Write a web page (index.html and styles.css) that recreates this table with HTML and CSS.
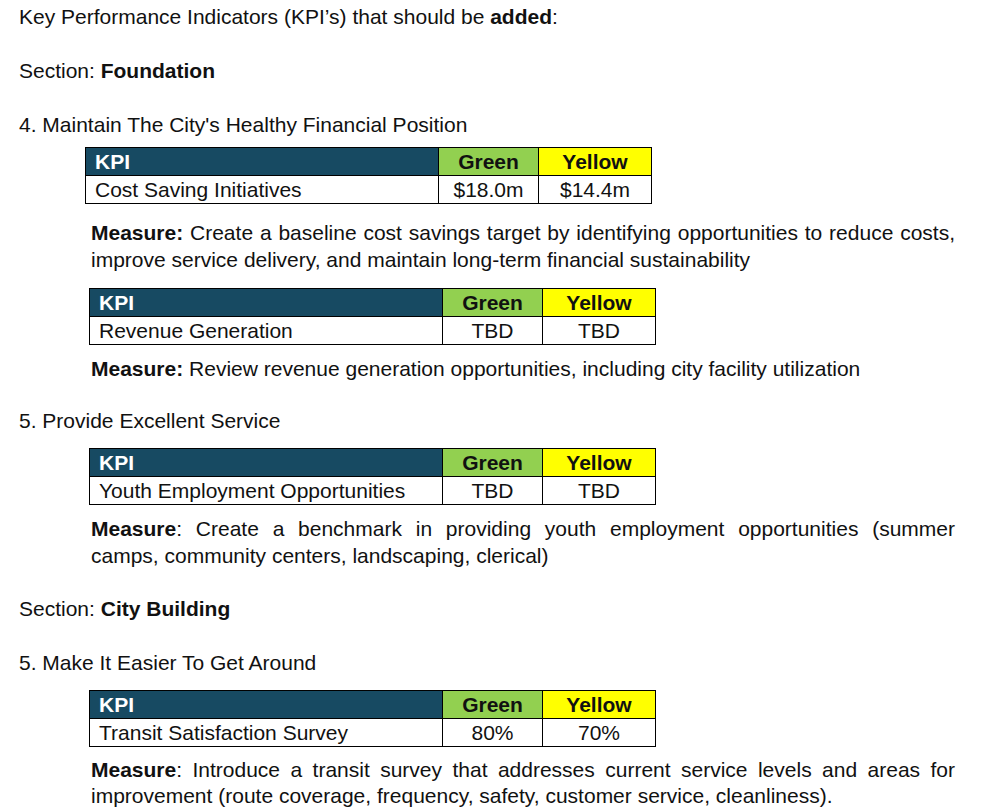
FILE: index.html
```html
<!DOCTYPE html>
<html>
<head>
<meta charset="utf-8">
<link rel="stylesheet" href="styles.css">
</head>
<body>
<div class="doc">
  <p class="line">Key Performance Indicators (KPI’s) that should be <b>added</b>:</p>
  <p class="line gap">Section: <b>Foundation</b></p>
  <p class="line gap">4. Maintain The City's Healthy Financial Position</p>

  <table class="kpi t1">
    <tr><th class="name">KPI</th><th class="green">Green</th><th class="yellow">Yellow</th></tr>
    <tr><td class="name">Cost Saving Initiatives</td><td>$18.0m</td><td>$14.4m</td></tr>
  </table>
  <p class="measure m1"><b>Measure:</b> Create a baseline cost savings target by identifying opportunities to reduce costs, improve service delivery, and maintain long-term financial sustainability</p>

  <table class="kpi t2">
    <tr><th class="name">KPI</th><th class="green">Green</th><th class="yellow">Yellow</th></tr>
    <tr><td class="name">Revenue Generation</td><td>TBD</td><td>TBD</td></tr>
  </table>
  <p class="measure m2"><b>Measure:</b> Review revenue generation opportunities, including city facility utilization</p>

  <p class="line gap g5">5. Provide Excellent Service</p>
  <table class="kpi t3">
    <tr><th class="name">KPI</th><th class="green">Green</th><th class="yellow">Yellow</th></tr>
    <tr><td class="name">Youth Employment Opportunities</td><td>TBD</td><td>TBD</td></tr>
  </table>
  <p class="measure m3"><b>Measure</b>: Create a benchmark in providing youth employment opportunities (summer camps, community centers, landscaping, clerical)</p>

  <p class="line gap g6">Section: <b>City Building</b></p>
  <p class="line gap">5. Make It Easier To Get Around</p>
  <table class="kpi t4">
    <tr><th class="name">KPI</th><th class="green">Green</th><th class="yellow">Yellow</th></tr>
    <tr><td class="name">Transit Satisfaction Survey</td><td>80%</td><td>70%</td></tr>
  </table>
  <p class="measure m4"><b>Measure</b>: Introduce a transit survey that addresses current service levels and areas for improvement (route coverage, frequency, safety, customer service, cleanliness).</p>
</div>
</body>
</html>
```
FILE: styles.css
```css
html, body {
  margin: 0;
  padding: 0;
  background: #ffffff;
}
body {
  font-family: "Liberation Sans", Arial, sans-serif;
  font-size: 21px;
  color: #111111;
}
.doc {
  padding: 3px 0 0 19px;
  width: 936px;
}
p {
  margin: 0;
  line-height: 27px;
}
.line.gap {
  margin-top: 27px;
}
.line.g5 {
  margin-top: 25px;
}
.line.g6 {
  margin-top: 26px;
}
b {
  font-weight: bold;
}
.kpi {
  border-collapse: collapse;
  table-layout: fixed;
  font-size: 21px;
}
.kpi th, .kpi td {
  border: 1px solid #000;
  height: 27px;
  padding: 0;
  line-height: 26px;
  text-align: center;
  white-space: nowrap;
}
.kpi th {
  font-weight: bold;
  background: #174a62;
  color: #ffffff;
}
.kpi th.green {
  background: #92d050;
  color: #111;
}
.kpi th.yellow {
  background: #ffff00;
  color: #111;
}
.kpi .name {
  text-align: left;
  padding-left: 9px;
}
.kpi th.name {
  width: 343px;
}
.kpi th.green { width: 99px; }
.kpi th.yellow { width: 112px; }

.t1 {
  margin: 9px 0 0 66px;
}
.t2, .t3, .t4 {
  margin-left: 70px;
}
.t2 { margin-top: 15px; }
.t3 { margin-top: 14px; }
.t4 { margin-top: 14px; }

.measure {
  margin-left: 72px;
  width: 864px;
  text-align: justify;
}
.m1 { margin-top: 15px; }
.m2 { margin-top: 10px; }
.m3 { margin-top: 10px; }
.m4 { margin-top: 10px; line-height: 26px; }
```
